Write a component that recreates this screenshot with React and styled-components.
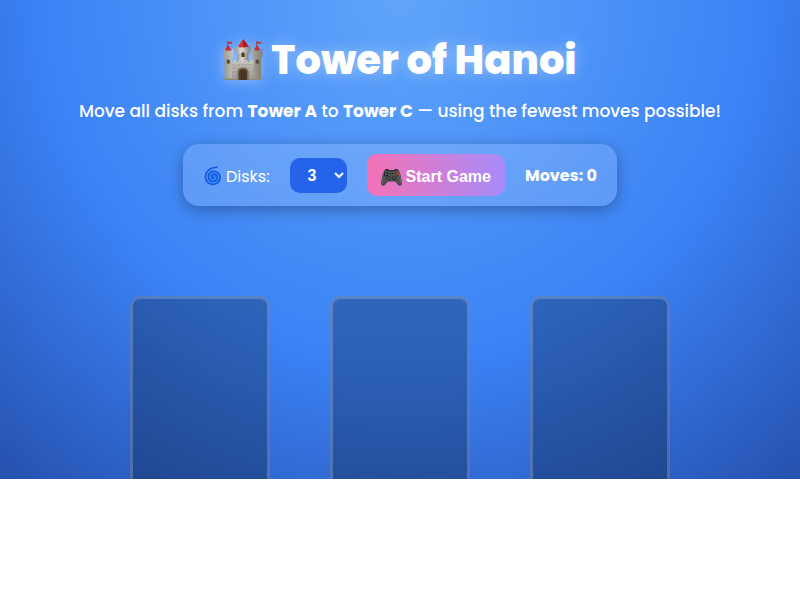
import React, { useState } from "react";
import styled, { createGlobalStyle } from "styled-components";

const GlobalStyle = createGlobalStyle`
  body {
    margin: 0;
    background: #fff;
  }
  *, *::before, *::after {
    box-sizing: border-box;
  }
`;

const Scene = styled.main`
  display: flex;
  flex-direction: column;
  align-items: center;
  padding-top: 32px;
  color: #fff;
  font-family: Poppins, Inter, sans-serif;
  background: radial-gradient(circle at top, #60a5fa, #3b82f6, #1e3f94) top / 100% 100vh;
`;

const Title = styled.h1`
  display: flex;
  align-items: center;
  gap: 8px;
  margin: 0;
  font-size: 40px;
  line-height: 56px;
  font-weight: 800;
  white-space: nowrap;
  text-shadow: 0 0 15px rgba(255, 255, 255, 0.4);
`;

const Subtitle = styled.p`
  margin: 8px 0 18px;
  font-size: 17px;
  font-weight: 500;
  line-height: 30px;
  text-align: center;
`;

const Controls = styled.form`
  display: flex;
  align-items: center;
  gap: 20px;
  padding: 10px 20px;
  border-radius: 16px;
  font-size: 16px;
  background: rgba(255, 255, 255, 0.15);
  box-shadow: 0 4px 15px rgba(0, 0, 0, 0.3);
`;

const DiskLabel = styled.label`
  display: flex;
  align-items: center;
  gap: 4px;
  padding-top: 2px;
`;

const DiskSelect = styled.select`
  width: 57px;
  height: 35px;
  padding: 8px 14px;
  border: 0;
  border-radius: 10px;
  color: #fff;
  background: #2563eb;
  font: 700 16px "Liberation Sans", Arial, sans-serif;
`;

const StartButton = styled.button`
  display: flex;
  align-items: center;
  gap: 4px;
  height: 42px;
  padding: 4px 14px 0;
  border: 0;
  border-radius: 10px;
  color: #fff;
  background: linear-gradient(90deg, #f472b6, #a78bfa);
  font: 700 16px "Liberation Sans", Arial, sans-serif;
  cursor: pointer;
`;

const Moves = styled.output`
  font-weight: 700;
`;

const Board = styled.section`
  display: flex;
  justify-content: center;
  gap: 60px;
  margin-top: 90px;
`;

const Tower = styled.div`
  width: 140px;
  height: 183px;
  border: 3px solid rgba(255, 255, 255, 0.2);
  border-bottom: 0;
  border-radius: 10px 10px 0 0;
  background: rgba(0, 0, 0, 0.25);
`;

const CastleSvg = styled.svg`
  width: 40px;
  height: 42px;
  overflow: visible;
  filter: drop-shadow(0 0 7px rgba(255, 255, 255, 0.4));
`;

const SmallIcon = styled.svg`
  width: ${(p) => p.$width}px;
  height: 20px;
  flex: none;
`;

function Castle() {
  return (
    <CastleSvg viewBox="0 0 40 42" aria-hidden="true">
      <defs>
        <linearGradient id="stone">
          <stop offset="0" stopColor="#9a9992" />
          <stop offset=".4" stopColor="#dddbd3" />
          <stop offset="1" stopColor="#827f77" />
        </linearGradient>
        <linearGradient id="wall" x2="0" y2="1">
          <stop offset="0" stopColor="#c6c4bc" />
          <stop offset="1" stopColor="#a19e94" />
        </linearGradient>
      </defs>
      <path d="M4.500 3v6M33.500 3v6" stroke="#695953" strokeWidth=".8" />
      <path d="M4.500 2l2.500 1 2.500-.5-1 1.200 1 1.200-5-.5zM33.500 2l2.500 1 2.500-.5-1 1.200 1 1.200-5-.5z" fill="#c52f34" />
      <path d="M14.500 12h11v14h-11z" fill="url(#stone)" />
      <path d="M12.500 7h3v2h2.500V7h4v2h2.500V7h3v5l-2 2.500h-11l-2-2.500z" fill="url(#stone)" />
      <path d="M20.200 0L15 7.400q5.500 2.200 10.800 0z" fill="#d2352d" />
      <path d="M20.200 0L20 8l5.800-.6z" fill="#a91e28" />
      <path d="M18.300 18v-3.500q1.700-2.600 3.400 0V18z" fill="#56402f" />
      <path d="M8 23h2v-2h3v2h2.500v-2h3v2h3v-2h3v2H27v-2h3v2h2v18H8z" fill="url(#wall)" />
      <path d="M9 26h22M10 29h20M9 33h5M26 33h5M9 37h5M26 37h5" stroke="#8b887e" strokeWidth=".7" strokeDasharray="2 1" />
      <path d="M1.500 18h7.500v23H1.500zM30.500 18H38v23h-7.500z" fill="url(#stone)" />
      <path d="M0 10h2v2h2v-2h3v2h2v-2h1.500v7L9 20H1.500L0 17zM29 10h2v2h2v-2h3v2h2v-2h1.500v7L38 20h-7.500L29 17z" fill="url(#stone)" />
      <path d="M5 5.500L2 11q3 1.300 6.500 0zM34 5.500L31 11q3 1.300 6.500 0z" fill="#cf302e" />
      <path d="M3.700 24.500v-3q1.600-2 3.200 0v3zM32.700 24.500v-3q1.600-2 3.200 0v3z" fill="#5d4732" />
      <path d="M14.300 41v-7.500q0-5 5.700-5t5.700 5V41z" fill="#75695b" />
      <path d="M16 41v-7q0-4 4-4t4 4v7z" fill="#553b27" />
      <path d="M18.300 31.500V41M20 30.500V41M21.800 31.500V41" stroke="#2e261f" strokeWidth=".6" />
      <path d="M0 39.500h14.500V41H0zM25.500 39.500h14V41h-14z" fill="#8e8877" />
    </CastleSvg>
  );
}

function Cyclone() {
  return (
    <SmallIcon $width={19} viewBox="0 0 19 20" aria-hidden="true">
      <circle cx="10" cy="11.300" r="6.500" fill="#2f78ee" />
      <g fill="none" strokeLinecap="round">
        <path d="M14 1.300C7 1.300 2.500 5.800 2.500 11.300c.2 4.500 3.700 7 7.700 7 4.300-.2 7-3.400 7-7.200-.2-3.700-3-5.800-6.500-5.800-3.200.1-5.300 2.500-5.200 5.500.2 2.900 2.200 4.600 4.900 4.500 2.400-.1 4-1.900 3.900-4-.2-2-1.700-3.200-3.500-3.100-1.700.1-2.700 1.400-2.500 2.800.2 1.100 1.100 1.700 2.100 1.500" stroke="#1557df" strokeWidth="1.700" />
        <path d="M13.500 2.500C8 2.300 4 6.300 4 11c.1 3.800 2.900 6 6.300 5.900 3.400-.2 5.600-2.700 5.500-5.700-.2-2.800-2.300-4.500-4.900-4.400-2.400.1-4 1.900-3.900 4.100.2 1.900 1.700 3.200 3.500 3.100 1.500-.1 2.600-1.200 2.500-2.600" stroke="#4b9bff" strokeWidth=".9" />
      </g>
    </SmallIcon>
  );
}

function Gamepad() {
  return (
    <SmallIcon $width={21} viewBox="0 0 21 20" aria-hidden="true">
      <path d="M4 2.500l3-.8 1 1.300h5l1-1.300 3 .8 1 2H3z" fill="#292d2e" />
      <path d="M3 4.500Q5 2.700 8 4h5q3-1.300 5 .5Q19.500 7 20.500 15q.5 3.500-1.700 3.500-1.700 0-4.300-4.300h-8Q4 18.500 2.300 18.500.1 18.500.500 15 1.500 7 3 4.500z" fill="#505052" stroke="#3b3c3e" strokeWidth=".6" />
      <path d="M3 6Q1.500 10 1.300 16M18 6q1.500 4 1.700 10" fill="none" stroke="#717171" strokeWidth=".7" />
      <circle cx="5" cy="7.300" r="2.200" fill="#242729" />
      <circle cx="5" cy="7.100" r="1.100" fill="#626364" />
      <circle cx="7.800" cy="11.300" r="2" fill="#232628" />
      <path d="M7.800 10v2.600M6.500 11.300h2.600" stroke="#777" strokeWidth=".8" />
      <circle cx="13.200" cy="11.300" r="2" fill="#232628" />
      <circle cx="13.200" cy="11.100" r="1" fill="#626364" />
      <path d="M9 6.500h1M11 6.500h1" stroke="#222" strokeWidth="1" />
      <circle cx="16" cy="5.500" r=".9" fill="#c9382f" />
      <circle cx="14.400" cy="7.100" r=".8" fill="#733532" />
      <circle cx="17.600" cy="7.100" r=".9" fill="#d94538" />
      <circle cx="16" cy="8.700" r=".8" fill="#562f2c" />
    </SmallIcon>
  );
}

export default function App() {
  const [disks, setDisks] = useState(3);

  return (
    <>
      <GlobalStyle />
      <Scene>
        <Title>
          <Castle />
          Tower of Hanoi
        </Title>
        <Subtitle>
          Move all disks from <strong>Tower A</strong> to <strong>Tower C</strong> — using the fewest moves possible!
        </Subtitle>
        <Controls onSubmit={(e) => e.preventDefault()}>
          <DiskLabel htmlFor="disks">
            <Cyclone />
            Disks:
          </DiskLabel>
          <DiskSelect id="disks" value={disks} onChange={(e) => setDisks(Number(e.target.value))}>
            {[3, 4, 5, 6, 7].map((n) => (
              <option key={n} value={n}>{n}</option>
            ))}
          </DiskSelect>
          <StartButton type="submit">
            <Gamepad />
            Start Game
          </StartButton>
          <Moves>Moves: 0</Moves>
        </Controls>
        <Board aria-label="Towers">
          <Tower />
          <Tower />
          <Tower />
        </Board>
      </Scene>
    </>
  );
}
